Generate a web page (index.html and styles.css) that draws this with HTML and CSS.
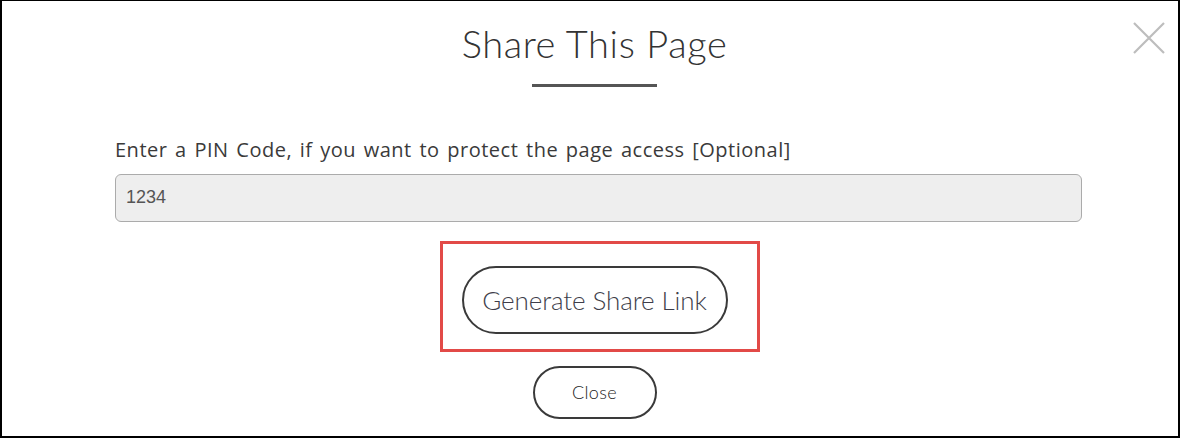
FILE: index.html
```html
<!DOCTYPE html>
<html>
<head>
<meta charset="utf-8">
<link rel="stylesheet" href="styles.css">
</head>
<body>
<div class="frame">
  <button class="close-x" aria-label="Close">
    <svg width="32" height="32" viewBox="0 0 32 32"><path d="M1 1L31 31M31 1L1 31" stroke="#bdbdbd" stroke-width="2.2" fill="none"/></svg>
  </button>
  <div class="content">
    <h1 class="title">Share This Page</h1>
    <div class="rule"></div>
    <label class="label">Enter a PIN Code, if you want to protect the page access [Optional]</label>
    <div class="input">1234</div>
    <div class="highlight">
      <button class="btn btn-lg">Generate Share Link</button>
    </div>
    <button class="btn btn-sm">Close</button>
  </div>
</div>
</body>
</html>
```
FILE: styles.css
```css
html, body {
  margin: 0;
  padding: 0;
  background: #fff;
}
.frame {
  position: relative;
  box-sizing: border-box;
  width: 1180px;
  height: 438px;
  border: 2px solid #000;
  border-top-width: 1px;
  font-family: Lato, "Open Sans", sans-serif;
  color: #333;
}
.close-x {
  position: absolute;
  top: 21px;
  left: 1131px;
  padding: 0;
  margin: 0;
  border: 0;
  background: none;
  width: 32px;
  height: 32px;
}
.close-x svg { display: block; }
.content {
  margin-left: 113px;
  width: 959px;
  display: flex;
  flex-direction: column;
  align-items: center;
}
.title {
  margin: 20px 0 0;
  font-size: 38px;
  font-weight: 300;
  line-height: 1.2;
  color: #333;
  letter-spacing: 0.6px;
}
.rule {
  margin-top: 17px;
  width: 125px;
  height: 3px;
  background: #555;
}
.label {
  align-self: flex-start;
  margin-top: 52px;
  font-family: "Open Sans", Lato, sans-serif;
  font-size: 20px;
  line-height: 22px;
  font-weight: 400;
  color: #3a3a3a;
  letter-spacing: 0.5px;
  word-spacing: 2px;
}
.input {
  align-self: flex-start;
  box-sizing: border-box;
  margin-top: 13px;
  width: 967px;
  height: 48px;
  border: 1px solid #ababab;
  border-radius: 6px;
  background: #eeeeee;
  padding-left: 10px;
  display: flex;
  align-items: center;
  font-family: "Liberation Sans", Arial, sans-serif;
  font-size: 18px;
  color: #555;
}
.highlight {
  margin-top: 19px;
  border: 3px solid #e24a47;
  padding: 22px 29px 15px 19px;
  margin-left: 10px;
}
.btn {
  display: flex;
  align-items: center;
  justify-content: center;
  background: #fff;
  border: 2px solid #3a3a3a;
  border-radius: 40px;
  font-family: Lato, "Open Sans", sans-serif;
  font-weight: 300;
  color: #3e3e4a;
  padding: 0;
  box-sizing: border-box;
}
.btn-lg {
  width: 266px;
  height: 68px;
  font-size: 26px;
  letter-spacing: -0.1px;
}
.btn-sm {
  margin-top: 14px;
  width: 124px;
  height: 53px;
  font-size: 18px;
  letter-spacing: 0.4px;
  color: #222;
}
```
